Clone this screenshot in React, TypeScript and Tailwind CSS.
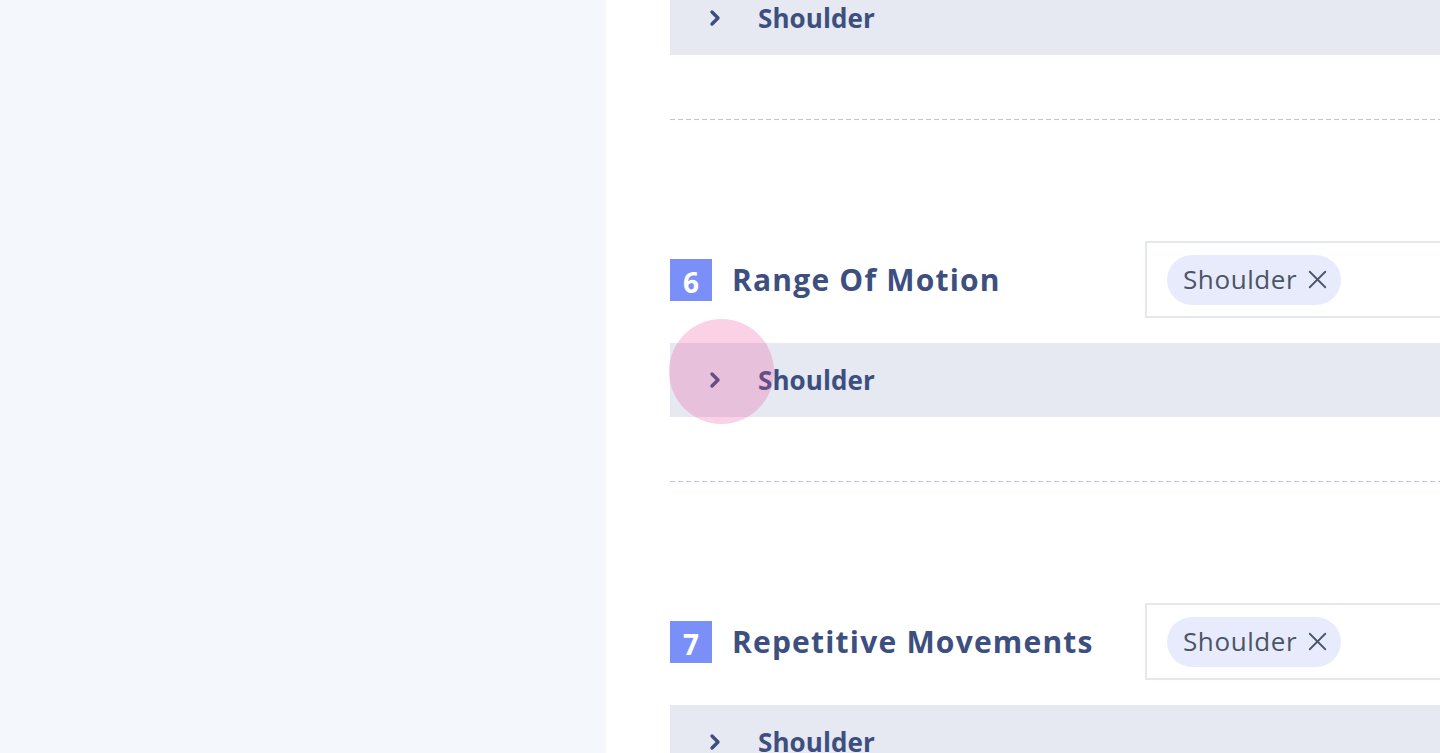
import React from 'react';
import { ChevronRight, X } from 'lucide-react';

const font = { fontFamily: '"Open Sans", "Liberation Sans", sans-serif' };

const Bar: React.FC<{ className?: string }> = ({ className = '' }) => (
  <div className={`h-[74px] bg-[#e6e9f2] flex items-center shrink-0 ${className}`}>
    <ChevronRight className="ml-[33px] text-[#3d4f7f]" size={24} strokeWidth={3.4} />
    <span className="ml-[31px] text-[26px] font-bold text-[#3d4f7f] tracking-[0.1px]">Shoulder</span>
  </div>
);

const Divider = () => (
  <div className="mt-16 h-px shrink-0 bg-[repeating-linear-gradient(90deg,#bcc2f0_0px,#bcc2f0_5px,transparent_5px,transparent_8px)]" />
);

const Section: React.FC<{ num: number; title: string; touch?: boolean }> = ({ num, title, touch }) => (
  <div className="mt-[121px] shrink-0">
    <div className="flex items-center h-[77px]">
      <div className="w-[475px] flex items-center">
        <div className="w-[42px] h-[42px] bg-[#7b8ff9] flex items-center justify-center text-white text-[28px] font-bold pt-1">
          {num}
        </div>
        <h2 className="ml-[20px] text-[30px] font-bold text-[#3d4f7f] tracking-[1.2px]">{title}</h2>
      </div>
      <div className="w-[700px] h-[77px] border-2 border-[#e4e7ee] flex items-center pl-[20px] shrink-0">
        <div className="h-[50px] rounded-full bg-[#e8ebfc] flex items-center pl-[16px] pr-[8px] gap-[5px]">
          <span className="text-[26px] text-[#4a5568] tracking-[0.6px]">Shoulder</span>
          <X size={31} strokeWidth={1.4} className="text-[#4a5568]" />
        </div>
      </div>
    </div>
    <div className="relative mt-[25px]">
      <Bar />
      {touch && (
        <div className="absolute left-[-1px] top-[-24px] w-[105px] h-[105px] rounded-full bg-[#ec4899]/25" />
      )}
    </div>
    <Divider />
  </div>
);

export default function App() {
  return (
    <div className="flex w-[1440px] h-[753px] overflow-hidden bg-white" style={font}>
      <div className="w-[606px] h-full bg-[#f4f7fc] shrink-0" />
      <div className="flex-1 overflow-hidden pl-[64px]">
        <div className="flex flex-col w-[1300px]">
          <Bar className="-mt-[19px]" />
          <Divider />
          <Section num={6} title="Range Of Motion" touch />
          <Section num={7} title="Repetitive Movements" />
        </div>
      </div>
    </div>
  );
}
